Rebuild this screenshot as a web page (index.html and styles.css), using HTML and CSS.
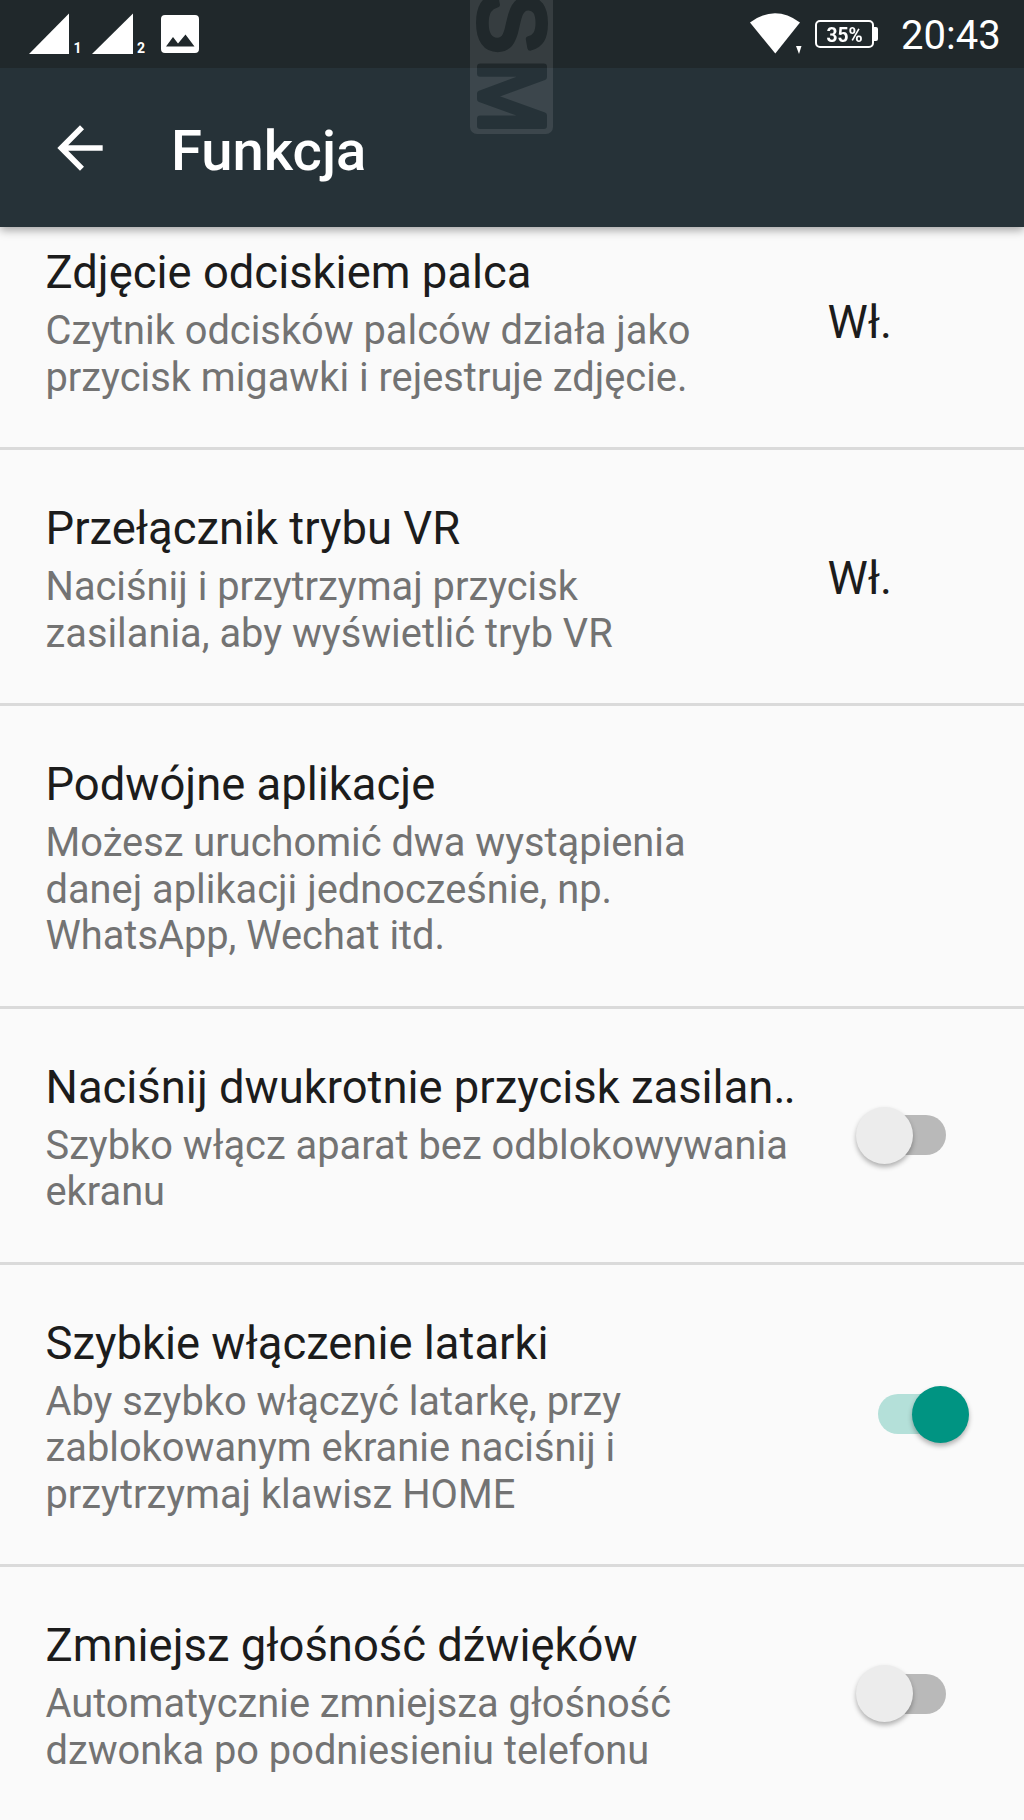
FILE: index.html
```html
<!DOCTYPE html>
<html lang="pl">
<head>
<meta charset="utf-8">
<title>Funkcja</title>
<link rel="stylesheet" href="styles.css">
</head>
<body>
<div class="screen">
  <header class="top">
    <div class="status">
      <svg class="status-left" width="220" height="68" viewBox="0 0 220 68" fill="#fff">
        <path d="M29 54L69 13.500V54z"/>
        <text class="sim" x="73.500" y="53">1</text>
        <path d="M92 54L133 13.500V54z"/>
        <text class="sim" x="137" y="53">2</text>
        <path fill-rule="evenodd" d="M165 15h30a4 4 0 0 1 4 4v30a4 4 0 0 1-4 4h-30a4 4 0 0 1-4-4V19a4 4 0 0 1 4-4zM166 46.500h28.500L185.500 34.500l-7.500 9L173 37z"/>
      </svg>
      <div class="status-right">
        <svg width="53" height="68" viewBox="0 0 53 68" fill="#fff">
          <path d="M0 22.500Q25 4 50 22.500L25.300 53.500z"/>
          <path d="M46 46h5.500l-2.500 8z"/>
        </svg>
        <div class="battery"><span>35%</span></div>
        <div class="clock">20:43</div>
      </div>
    </div>
    <div class="toolbar">
      <svg class="back" width="68" height="68" viewBox="0 0 24 24" fill="#fff"><path d="M20 11H7.830l5.590-5.590L12 4l-8 8 8 8 1.410-1.410L7.830 13H20z"/></svg>
      <h1>Funkcja</h1>
    </div>
    <svg class="watermark" width="84" height="135" viewBox="0 0 84 135">
      <mask id="letters">
        <rect width="84" height="135" fill="#fff"/>
        <g class="wm-letters">
          <text transform="translate(10 -8) rotate(90)">S</text>
          <text transform="translate(10 59) rotate(90) scale(.97 1)">M</text>
        </g>
      </mask>
      <rect y="-10" width="83" height="144" rx="7" fill="#fff" fill-opacity=".1" mask="url(#letters)"/>
    </svg>
  </header>
  <main class="list">
    <section class="row">
      <div class="text"><h2>Zdjęcie odciskiem palca</h2><p>Czytnik odcisków palców działa jako<br>przycisk migawki i rejestruje zdjęcie.</p></div>
      <div class="value">Wł.</div>
    </section>
    <section class="row">
      <div class="text"><h2>Przełącznik trybu VR</h2><p>Naciśnij i przytrzymaj przycisk<br>zasilania, aby wyświetlić tryb VR</p></div>
      <div class="value">Wł.</div>
    </section>
    <section class="row tall">
      <div class="text"><h2>Podwójne aplikacje</h2><p>Możesz uruchomić dwa wystąpienia<br>danej aplikacji jednocześnie, np.<br>WhatsApp, Wechat itd.</p></div>
    </section>
    <section class="row">
      <div class="text"><h2>Naciśnij dwukrotnie przycisk zasilan<span class="dots">..</span></h2><p>Szybko włącz aparat bez odblokowywania<br>ekranu</p></div>
      <div class="switch"><span class="knob"></span></div>
    </section>
    <section class="row tall">
      <div class="text"><h2>Szybkie włączenie latarki</h2><p>Aby szybko włączyć latarkę, przy<br>zablokowanym ekranie naciśnij i<br>przytrzymaj klawisz HOME</p></div>
      <div class="switch on"><span class="knob"></span></div>
    </section>
    <section class="row">
      <div class="text"><h2>Zmniejsz głośność dźwięków</h2><p>Automatycznie zmniejsza głośność<br>dzwonka po podniesieniu telefonu</p></div>
      <div class="switch"><span class="knob"></span></div>
    </section>
  </main>
</div>
</body>
</html>
```
FILE: styles.css
```css
* { box-sizing: border-box; }
body { margin: 0; font-family: Roboto, sans-serif; background: #fafafa; }
.screen { width: 1024px; height: 1820px; overflow: hidden; background: #fafafa; }
.top { position: relative; z-index: 1; height: 227px; background: #263238; box-shadow: 0 3px 9px rgba(0, 0, 0, .36); }
.status { display: flex; justify-content: space-between; height: 68px; background: #20282b; color: #fff; }
.sim { font: 700 14px Roboto, sans-serif; }
.status-right { display: flex; align-items: center; padding-right: 24px; }
.status-right svg { margin-right: 12px; }
.battery { position: relative; width: 59px; height: 28px; border: 2px solid #fff; border-radius: 5px; text-align: center; font-size: 20px; line-height: 26px; font-weight: 700; margin-right: 27px; }
.battery span { display: block; transform: scaleX(.96); }
.battery::after { content: ""; position: absolute; right: -6px; top: 5px; width: 5px; height: 14px; background: #fff; border-radius: 0 2px 2px 0; }
.clock { font-size: 40px; line-height: 68px; width: 99px; padding-top: 4px; }
.toolbar { display: flex; align-items: center; height: 159px; padding-left: 46px; }
.toolbar h1 { margin: 8px 0 0 57px; color: #fff; font-size: 56.2px; line-height: 67px; font-weight: 500; }
.watermark { position: absolute; left: 470px; top: 0; }
.wm-letters { font: 92px "Liberation Sans", sans-serif; stroke: #000; stroke-width: 6px; stroke-linejoin: round; }
.list { margin-top: -33px; }
.row { display: flex; align-items: flex-start; height: 256px; padding-left: 45.5px; border-bottom: 3px solid #dadada; }
.row.tall { height: 302.5px; }
.text { width: 782px; padding-top: 52px; flex: none; white-space: nowrap; }
h2 { margin: 0; font-size: 45.4px; line-height: 53px; font-weight: 400; color: #1c1c1c; }
.dots { letter-spacing: -1.5px; }
p { margin: 9px 0 0; font-size: 39.8px; line-height: 46.5px; color: #737373; }
.value { align-self: center; padding-top: 4px; font-size: 45.4px; line-height: 53px; color: #1c1c1c; }
.switch { align-self: center; display: flex; align-items: center; width: 68px; height: 40px; margin-left: 50.5px; border-radius: 20px; background: #b9b9b9; }
.knob { flex: none; width: 57px; height: 57px; margin-left: -22.5px; border-radius: 50%; background: #ececec; box-shadow: 0 3px 5px rgba(0, 0, 0, .3); }
.switch.on { background: #b4e0d9; }
.switch.on .knob { margin-left: 33.5px; background: #009482; }
```
